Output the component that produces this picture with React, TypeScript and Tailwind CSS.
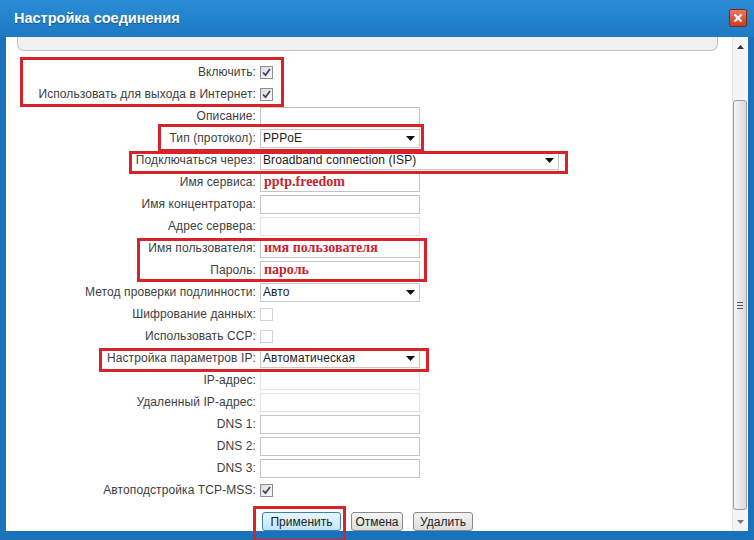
type Row = {
  label: string
  kind: 'check' | 'input' | 'select'
  checked?: boolean
  disabled?: boolean
  value?: string
  red?: boolean
  wide?: boolean
}

const ROWS: Row[] = [
  { label: 'Включить:', kind: 'check', checked: true },
  { label: 'Использовать для выхода в Интернет:', kind: 'check', checked: true },
  { label: 'Описание:', kind: 'input' },
  { label: 'Тип (протокол):', kind: 'select', value: 'PPPoE' },
  { label: 'Подключаться через:', kind: 'select', value: 'Broadband connection (ISP)', wide: true },
  { label: 'Имя сервиса:', kind: 'input', value: 'pptp.freedom', red: true },
  { label: 'Имя концентратора:', kind: 'input' },
  { label: 'Адрес сервера:', kind: 'input', disabled: true },
  { label: 'Имя пользователя:', kind: 'input', value: 'имя пользователя', red: true },
  { label: 'Пароль:', kind: 'input', value: 'пароль', red: true },
  { label: 'Метод проверки подлинности:', kind: 'select', value: 'Авто' },
  { label: 'Шифрование данных:', kind: 'check', disabled: true },
  { label: 'Использовать CCP:', kind: 'check', disabled: true },
  { label: 'Настройка параметров IP:', kind: 'select', value: 'Автоматическая' },
  { label: 'IP-адрес:', kind: 'input', disabled: true },
  { label: 'Удаленный IP-адрес:', kind: 'input', disabled: true },
  { label: 'DNS 1:', kind: 'input' },
  { label: 'DNS 2:', kind: 'input' },
  { label: 'DNS 3:', kind: 'input' },
  { label: 'Автоподстройка TCP-MSS:', kind: 'check', checked: true },
]

// red annotation frames drawn over the form
const MARKS = [
  'left-[20px] top-[57px] w-[264px] h-[50px]',
  'left-[158px] top-[124px] w-[266px] h-[28px]',
  'left-[129px] top-[151px] w-[439px] h-[23px]',
  'left-[137px] top-[238px] w-[290px] h-[44px]',
  'left-[99px] top-[348px] w-[330px] h-[24px]',
  'left-[253px] top-[506px] w-[93px] h-[36px]',
]

function Checkbox({ checked, disabled }: { checked?: boolean; disabled?: boolean }) {
  return (
    <div
      className={
        disabled
          ? 'w-[13px] h-[13px] border border-[#d4d4d4] bg-white'
          : 'w-[13px] h-[13px] border border-[#8e8f8f] bg-gradient-to-br from-[#dcdcdc] to-[#fbfbfb] flex items-center justify-center'
      }
    >
      {checked && (
        <svg width="9" height="9" viewBox="0 0 9 9">
          <path d="M1 4.5 L3.5 7.2 L8 1" fill="none" stroke="#3a4668" strokeWidth="1.8" />
        </svg>
      )}
    </div>
  )
}

function Arrow() {
  return (
    <svg width="9" height="5" viewBox="0 0 9 5">
      <path d="M0 0 H9 L4.5 5 Z" fill="#111" />
    </svg>
  )
}

function Control({ row }: { row: Row }) {
  if (row.kind === 'check') return <Checkbox checked={row.checked} disabled={row.disabled} />
  if (row.kind === 'select') {
    return (
      <div
        className={`${row.wide ? 'w-[299px]' : 'w-[160px]'} h-[19px] border border-[#c9c9c9] bg-white flex items-center justify-between pl-[2px] pr-[4px] text-[12px] tracking-[0.1px] text-[#222]`}
      >
        <span>{row.value}</span>
        <Arrow />
      </div>
    )
  }
  return (
    <div
      className={`w-[160px] h-[19px] border ${row.disabled ? 'border-[#e3e3e3]' : 'border-[#c4c4c4]'} bg-white flex items-center pl-[3px]`}
    >
      {row.value && (
        <span className="font-['Liberation_Serif',serif] font-bold text-[14px] leading-none text-[#c4262e]">
          {row.value}
        </span>
      )}
    </div>
  )
}

function Button({ label, primary, w }: { label: string; primary?: boolean; w: string }) {
  return (
    <div
      className={`${w} h-[19px] rounded-[3px] border flex items-center justify-center text-[12px] text-[#222] ${
        primary
          ? 'border-[#3c7fb1] bg-gradient-to-b from-[#eaf6fd] to-[#bee6fd]'
          : 'border-[#8a8a8a] bg-gradient-to-b from-[#f4f4f4] to-[#dcdcdc]'
      }`}
    >
      {label}
    </div>
  )
}

export default function App() {
  return (
    <div className="relative w-[754px] h-[540px] overflow-hidden bg-[#1a72ba] font-['Liberation_Sans',Arial,sans-serif]">
      {/* title bar */}
      <div className="h-[37px] flex items-center justify-between pl-[14px] pr-[7px] bg-gradient-to-b from-[#2a8bd4] to-[#1d7ac4]">
        <span className="text-white font-bold text-[14.5px] [text-shadow:0_1px_1px_rgba(0,0,0,0.35)]">
          Настройка соединения
        </span>
        <div className="w-[18px] h-[18px] -mt-[2px] rounded-[2px] border border-[#7d2a1c] bg-gradient-to-b from-[#ec7660] to-[#c93a22] flex items-center justify-center">
          <svg width="10" height="10" viewBox="0 0 10 10">
            <path d="M1.5 1.5 L8.5 8.5 M8.5 1.5 L1.5 8.5" stroke="#fff" strokeWidth="2.2" />
          </svg>
        </div>
      </div>

      {/* content */}
      <div className="mx-[6px] h-[494px] bg-white flex text-[#3d3d3d] text-[12px]">
        <div className="flex-1 flex flex-col">
          <div className="ml-[11px] mr-[14px] h-[15px] border-x border-b border-[#c2c2c2] rounded-b-[7px] bg-[#f1f1f1]" />

          <div className="mt-[10px] flex flex-col">
            {ROWS.map((row) => (
              <div key={row.label} className="h-[22px] flex items-center gap-[4px]">
                <div className="w-[250px] text-right tracking-[0.1px]">{row.label}</div>
                <Control row={row} />
              </div>
            ))}
          </div>

          <div className="mt-[11px] ml-[256px] flex gap-[10px]">
            <Button label="Применить" primary w="w-[79px]" />
            <Button label="Отмена" w="w-[52px]" />
            <Button label="Удалить" w="w-[60px]" />
          </div>
        </div>

        {/* scrollbar */}
        <div className="w-[15px] mr-[1px] bg-[#f5f5f5] border-l border-[#e6e6e6] flex flex-col">
          <div className="h-[20px] flex items-center justify-center">
            <svg width="7" height="4" viewBox="0 0 7 4">
              <path d="M0 4 L3.5 0 L7 4 Z" fill="#333" />
            </svg>
          </div>
          <div className="flex-1 pt-[43px] pb-[3px] flex">
            <div className="flex-1 rounded-[3px] border border-[#9c9c9c] bg-gradient-to-r from-[#f6f6f6] to-[#d9d9d9] flex flex-col items-center justify-center gap-[2px]">
              <div className="w-[6px] h-px bg-[#555]" />
              <div className="w-[6px] h-px bg-[#555]" />
              <div className="w-[6px] h-px bg-[#555]" />
            </div>
          </div>
          <div className="h-[18px] flex items-center justify-center">
            <svg width="7" height="4" viewBox="0 0 7 4">
              <path d="M0 0 L7 0 L3.5 4 Z" fill="#777" />
            </svg>
          </div>
        </div>
      </div>

      {MARKS.map((m) => (
        <div key={m} className={`absolute ${m} border-[3px] border-[#d8232b]`} />
      ))}
    </div>
  )
}
